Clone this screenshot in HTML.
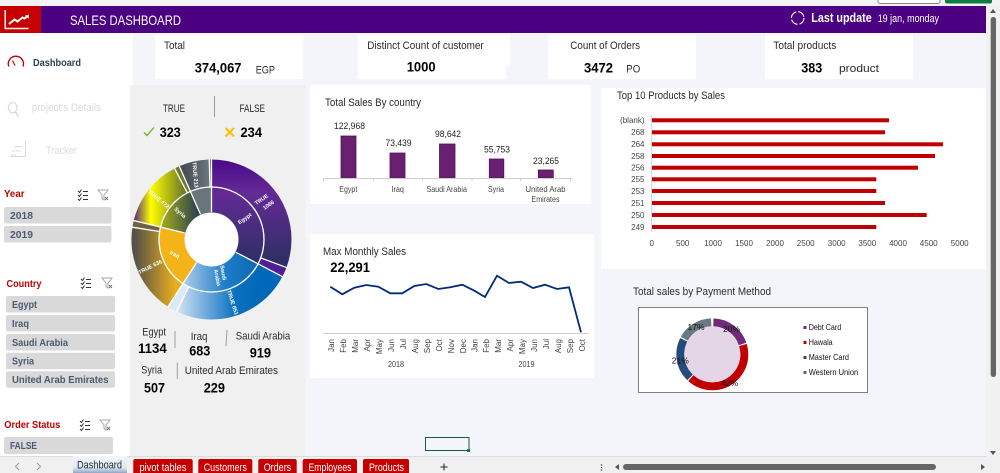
<!DOCTYPE html>
<html lang="en"><head><meta charset="utf-8"><title>Sales Dashboard</title>
<style>
html,body{margin:0;padding:0;width:1000px;height:473px;overflow:hidden;background:#fff}
svg{display:block;filter:blur(.3px)}
text{font-family:"Liberation Sans",sans-serif;fill:#222}
.b{font-weight:bold;fill:#000;font-size:14px}
.l{font-size:11px;fill:#2b2b2b}
.s{font-size:8px;fill:#444}
.sl{font-size:10.500px;font-weight:bold;fill:#4a5a70}
.r{font-size:10.500px;font-weight:bold;fill:#c00000}
.w{font-size:5.500px;fill:#fff;font-weight:bold}
.t{font-size:11px;fill:#fff}
</style></head><body>
<svg width="1000" height="473" viewBox="0 0 1000 473" xmlns="http://www.w3.org/2000/svg">
<defs>
<linearGradient id="eg" gradientUnits="userSpaceOnUse" x1="0" y1="160" x2="0" y2="270"><stop offset="0" stop-color="#4b0a8a"/><stop offset=".3" stop-color="#642a96"/><stop offset="1" stop-color="#263060"/></linearGradient>
<linearGradient id="sa" gradientUnits="userSpaceOnUse" x1="168" y1="0" x2="262" y2="0"><stop offset="0" stop-color="#f2f7fc"/><stop offset=".72" stop-color="#0a70c0"/><stop offset="1" stop-color="#0068b8"/></linearGradient>
<linearGradient id="sa2" gradientUnits="userSpaceOnUse" x1="170" y1="0" x2="250" y2="0"><stop offset="0" stop-color="#d6e6f6"/><stop offset=".7" stop-color="#1f7cc8"/><stop offset="1" stop-color="#0f6db8"/></linearGradient>
<linearGradient id="ir" gradientUnits="userSpaceOnUse" x1="132" y1="0" x2="175" y2="0"><stop offset="0" stop-color="#4c4c4c"/><stop offset="1" stop-color="#e8ae1e"/></linearGradient>
<linearGradient id="sy" gradientUnits="userSpaceOnUse" x1="133" y1="0" x2="192" y2="0"><stop offset="0" stop-color="#4b1a80"/><stop offset=".3" stop-color="#ffff00"/><stop offset="1" stop-color="#4c5a30"/></linearGradient>
<linearGradient id="sy2" gradientUnits="userSpaceOnUse" x1="160" y1="0" x2="199" y2="0"><stop offset="0" stop-color="#a8b018"/><stop offset="1" stop-color="#25404f"/></linearGradient>
<linearGradient id="ua" gradientUnits="userSpaceOnUse" x1="180" y1="0" x2="211" y2="0"><stop offset="0" stop-color="#3f474e"/><stop offset="1" stop-color="#6e7880"/></linearGradient>
<linearGradient id="tab" x1="0" y1="0" x2="0" y2="1"><stop offset="0" stop-color="#f4f6fa"/><stop offset=".7" stop-color="#dfe6f0"/><stop offset="1" stop-color="#8fa6c4"/></linearGradient>
<g id="ic1" fill="none" stroke="#333" stroke-width="1"><path d="M-5-4l1.500 1.500 2-3M-5 0l1.500 1.500 2-3M-5 4l1.500 1.500 2-3M0-3.500h5M0 .5h5M0 4.500h5"/></g>
<g id="ic2" fill="none" stroke="#a8a8a8" stroke-width="1"><path d="M-5-5h10l-4 5v5l-2-1.500v-3.500z"/><path d="M2 2l3 3M5 2l-3 3" stroke="#777"/></g>
</defs>

<!-- base -->
<rect width="1000" height="473" fill="#f4f5fa"/>
<rect x="0" y="0" width="1000" height="6" fill="#f3f3f3"/>
<rect x="878" y="-3" width="62" height="6.500" rx="2" fill="#fff" stroke="#888"/>
<rect x="945" y="-3" width="47" height="6.500" rx="2" fill="#107c41"/>
<rect x="986" y="6" width="14" height="451" fill="#f1f1f1"/>
<rect x="0" y="33" width="133" height="424" fill="#fff"/>
<rect x="130" y="85" width="175.500" height="372" fill="#f0f0f0"/>

<!-- header -->
<rect x="41" y="6" width="945" height="27" fill="#4b0082"/>
<rect x="0" y="6" width="41" height="27" fill="#c60000"/>
<path d="M5.200 10v18.500h23.300" fill="none" stroke="#f2f2f2" stroke-width="1.500"/>
<path d="M9 24l5.500-4.500 3 2 5-4 2 1 3-2.500" fill="none" stroke="#fff" stroke-width="2"/>
<path d="M25 15.500l4-.8-.3 4z" fill="#fff"/>
<text x="70" y="25" font-size="14" style="fill:#fff" textLength="111" lengthAdjust="spacingAndGlyphs">SALES DASHBOARD</text>
<circle cx="797.700" cy="18" r="6.300" fill="none" stroke="#fff" stroke-width="1.100" stroke-dasharray="8 2"/>
<text x="811.300" y="22" font-size="12.500" font-weight="bold" style="fill:#fff" textLength="60.400" lengthAdjust="spacingAndGlyphs">Last update</text>
<text x="877.700" y="22" class="t" textLength="61.300" lengthAdjust="spacingAndGlyphs">19 jan, monday</text>

<!-- KPI cards -->
<rect x="155" y="35" width="148" height="44" fill="#fff"/>
<rect x="358" y="35" width="152" height="31" fill="#fff"/><rect x="358" y="66" width="148" height="13" fill="#fff"/>
<rect x="548" y="35" width="148" height="44" fill="#fff"/>
<rect x="765" y="35" width="148" height="44" fill="#fff"/>
<text x="164" y="49" class="l" textLength="21" lengthAdjust="spacingAndGlyphs">Total</text>
<text x="194.700" y="72.500" class="b" textLength="46.800" lengthAdjust="spacingAndGlyphs">374,067</text>
<text x="255.700" y="73.500" class="l" textLength="19.300" lengthAdjust="spacingAndGlyphs">EGP</text>
<text x="367.300" y="49" class="l" textLength="116.400" lengthAdjust="spacingAndGlyphs">Distinct Count of customer</text>
<text x="406.700" y="71.500" class="b" textLength="29" lengthAdjust="spacingAndGlyphs">1000</text>
<text x="570.300" y="49" class="l" textLength="69.700" lengthAdjust="spacingAndGlyphs">Count of Orders</text>
<text x="584" y="72.500" class="b" textLength="29" lengthAdjust="spacingAndGlyphs">3472</text>
<text x="626.300" y="72.500" class="l" textLength="14" lengthAdjust="spacingAndGlyphs">PO</text>
<text x="773.300" y="49" class="l" textLength="63" lengthAdjust="spacingAndGlyphs">Total products</text>
<text x="801.300" y="72.500" class="b" textLength="21" lengthAdjust="spacingAndGlyphs">383</text>
<text x="839" y="72" class="l" textLength="40" lengthAdjust="spacingAndGlyphs">product</text>

<!-- Sidebar -->
<path d="M8.800 66.500a7.600 7.600 0 1 1 14.200 0" fill="none" stroke="#c00000" stroke-width="1.300"/>
<path d="M15 65.500l-2.500-5" stroke="#c00000" stroke-width="1.100"/>
<text x="33" y="66" font-size="10.500" font-weight="bold" style="fill:#2f3f4f" textLength="48" lengthAdjust="spacingAndGlyphs">Dashboard</text>
<ellipse cx="12.700" cy="107.700" rx="4.300" ry="5.200" fill="none" stroke="#dcdcdc" stroke-width="1.300"/>
<path d="M15.500 112l3 4.500" stroke="#d4d4d4" stroke-width="1.500"/>
<text x="31.700" y="111" font-size="11" style="fill:#dadada" textLength="69.300" lengthAdjust="spacingAndGlyphs">project's Details</text>
<path d="M25.500 140v16.500H11M14 146.500h7M12 151h9M11 155h5" fill="none" stroke="#dcdcdc" stroke-width="1.100"/>
<text x="46" y="154" font-size="11" style="fill:#dadada" textLength="31" lengthAdjust="spacingAndGlyphs">Tracker</text>

<text x="4" y="197" class="r" textLength="20.500" lengthAdjust="spacingAndGlyphs">Year</text>
<use href="#ic1" x="83" y="195"/><use href="#ic2" x="103" y="195"/>
<g fill="#d9d9d9">
<rect x="4" y="207" width="107.500" height="16.500" rx="2"/><rect x="4" y="226" width="107.500" height="16.500" rx="2"/>
<rect x="6" y="296" width="109" height="16.500" rx="2"/><rect x="6" y="315" width="109" height="16.500" rx="2"/><rect x="6" y="334" width="109" height="16.500" rx="2"/><rect x="6" y="352.700" width="109" height="16.500" rx="2"/><rect x="6" y="371.300" width="109" height="16.500" rx="2"/>
<rect x="4" y="437" width="109" height="17" rx="2"/>
</g>
<text x="10" y="219" class="sl" textLength="23" lengthAdjust="spacingAndGlyphs">2018</text>
<text x="10" y="238" class="sl" textLength="23" lengthAdjust="spacingAndGlyphs">2019</text>
<text x="6.500" y="287" class="r" textLength="35" lengthAdjust="spacingAndGlyphs">Country</text>
<use href="#ic1" x="86" y="283"/><use href="#ic2" x="107" y="283"/>
<text x="12" y="308" class="sl" textLength="25" lengthAdjust="spacingAndGlyphs">Egypt</text>
<text x="12" y="327" class="sl" textLength="17" lengthAdjust="spacingAndGlyphs">Iraq</text>
<text x="12" y="346" class="sl" textLength="56" lengthAdjust="spacingAndGlyphs">Saudi Arabia</text>
<text x="12" y="364.500" class="sl" textLength="22" lengthAdjust="spacingAndGlyphs">Syria</text>
<text x="12" y="383" class="sl" textLength="96.500" lengthAdjust="spacingAndGlyphs">United Arab Emirates</text>
<text x="4.300" y="428" class="r" textLength="56" lengthAdjust="spacingAndGlyphs">Order Status</text>
<use href="#ic1" x="85" y="425"/><use href="#ic2" x="105" y="425"/>
<text x="10" y="449" class="sl" textLength="27" lengthAdjust="spacingAndGlyphs">FALSE</text>

<!-- True/False panel -->
<text x="163" y="112" class="l" textLength="22" lengthAdjust="spacingAndGlyphs">TRUE</text>
<line x1="214.500" y1="96" x2="214.500" y2="117" stroke="#9a9a9a"/>
<text x="239.500" y="112" class="l" textLength="25.500" lengthAdjust="spacingAndGlyphs">FALSE</text>
<path d="M144 132.500l3 3 7-8" fill="none" stroke="#6cb52a" stroke-width="1.300"/>
<text x="159.700" y="137" class="b" textLength="21" lengthAdjust="spacingAndGlyphs">323</text>
<path d="M225.500 128l8.500 8.500M234 128l-8.500 8.500" fill="none" stroke="#ffc000" stroke-width="2"/>
<text x="240.500" y="137" class="b" textLength="21.500" lengthAdjust="spacingAndGlyphs">234</text>

<!-- Sunburst -->
<g fill="none">
<circle cx="211.500" cy="239.500" r="66" stroke="url(#eg)" stroke-width="28" pathLength="360" stroke-dasharray="110.500 249.500" stroke-dashoffset="90"/>
<circle cx="211.500" cy="239.500" r="66" stroke="#4f1d94" stroke-width="28" pathLength="360" stroke-dasharray="7.100 352.900" stroke-dashoffset="-20.500"/>
<circle cx="211.500" cy="239.500" r="66" stroke="url(#sa)" stroke-width="28" pathLength="360" stroke-dasharray="88.200 271.800" stroke-dashoffset="-27.600"/>
<circle cx="211.500" cy="239.500" r="66" stroke="#dbe8f5" stroke-width="28" pathLength="360" stroke-dasharray="7.100 352.900" stroke-dashoffset="-115.800"/>
<circle cx="211.500" cy="239.500" r="66" stroke="url(#ir)" stroke-width="28" pathLength="360" stroke-dasharray="65.900 294.100" stroke-dashoffset="-122.900"/>
<circle cx="211.500" cy="239.500" r="66" stroke="#6f6240" stroke-width="28" pathLength="360" stroke-dasharray="4.900 355.100" stroke-dashoffset="-188.800"/>
<circle cx="211.500" cy="239.500" r="66" stroke="url(#sy)" stroke-width="28" pathLength="360" stroke-dasharray="48.900 311.100" stroke-dashoffset="-193.700"/>
<circle cx="211.500" cy="239.500" r="66" stroke="#6c7a2c" stroke-width="28" pathLength="360" stroke-dasharray="3.700 356.300" stroke-dashoffset="-242.600"/>
<circle cx="211.500" cy="239.500" r="66" stroke="url(#ua)" stroke-width="28" pathLength="360" stroke-dasharray="22.100 337.900" stroke-dashoffset="-246.300"/>
<circle cx="211.500" cy="239.500" r="66" stroke="#5b636b" stroke-width="28" pathLength="360" stroke-dasharray="1.600 358.400" stroke-dashoffset="-268.400"/>

<circle cx="211.500" cy="239.500" r="39.500" stroke="url(#eg)" stroke-width="25" pathLength="360" stroke-dasharray="117.600 242.400" stroke-dashoffset="90"/>
<circle cx="211.500" cy="239.500" r="39.500" stroke="url(#sa2)" stroke-width="25" pathLength="360" stroke-dasharray="95.300 264.700" stroke-dashoffset="-27.600"/>
<circle cx="211.500" cy="239.500" r="39.500" stroke="#f4b417" stroke-width="25" pathLength="360" stroke-dasharray="70.800 289.200" stroke-dashoffset="-122.900"/>
<circle cx="211.500" cy="239.500" r="39.500" stroke="url(#sy2)" stroke-width="25" pathLength="360" stroke-dasharray="52.600 307.400" stroke-dashoffset="-193.700"/>
<circle cx="211.500" cy="239.500" r="39.500" stroke="#69747c" stroke-width="25" pathLength="360" stroke-dasharray="23.700 336.300" stroke-dashoffset="-246.300"/>
<circle cx="211.500" cy="239.500" r="52.500" stroke="#fff" stroke-width="1.300"/>
</g>
<g stroke="#fff" stroke-width="1.300">
<line x1="211.500" y1="212" x2="211.500" y2="159" transform="rotate(0 211.500 239.500)"/>
<line x1="211.500" y1="212" x2="211.500" y2="159" transform="rotate(117.600 211.500 239.500)"/>
<line x1="211.500" y1="212" x2="211.500" y2="159" transform="rotate(212.900 211.500 239.500)"/>
<line x1="211.500" y1="212" x2="211.500" y2="159" transform="rotate(283.700 211.500 239.500)"/>
<line x1="211.500" y1="212" x2="211.500" y2="159" transform="rotate(336.300 211.500 239.500)"/>
<line x1="211.500" y1="187" x2="211.500" y2="159" transform="rotate(110.500 211.500 239.500)"/>
<line x1="211.500" y1="187" x2="211.500" y2="159" transform="rotate(205.800 211.500 239.500)"/>
<line x1="211.500" y1="187" x2="211.500" y2="159" transform="rotate(278.800 211.500 239.500)"/>
<line x1="211.500" y1="187" x2="211.500" y2="159" transform="rotate(332.600 211.500 239.500)"/>
<line x1="211.500" y1="187" x2="211.500" y2="159" transform="rotate(358.400 211.500 239.500)"/>
</g>
<circle cx="211.500" cy="239.500" r="26.800" fill="#fff"/>
<g text-anchor="middle">
<text class="w" transform="translate(262.500 201) rotate(-35)">TRUE</text>
<text class="w" transform="translate(269.500 206.500) rotate(-35)">1066</text>
<text class="w" transform="translate(245.700 220) rotate(-35)">Egypt</text>
<text class="w" transform="translate(221.500 273) rotate(80)">Saudi</text>
<text class="w" transform="translate(215.500 278) rotate(80)">Arabia</text>
<text class="w" transform="translate(231 303) rotate(72)">TRUE 851</text>
<text class="w" transform="translate(174 256) rotate(25)">Iraq</text>
<text class="w" transform="translate(151 268.500) rotate(-27)">TRUE 636</text>
<text class="w" transform="translate(179 214) rotate(40)">Syria</text>
<text class="w" transform="translate(157.500 200.500) rotate(40)">TRUE 472</text>
<text class="w" transform="translate(193.500 175) rotate(85)">TRUE 213</text>
</g>

<!-- Country numbers -->
<text x="142.300" y="335.700" class="l" textLength="23.700" lengthAdjust="spacingAndGlyphs">Egypt</text>
<text x="138" y="353" class="b" textLength="28.700" lengthAdjust="spacingAndGlyphs">1134</text>
<line x1="175" y1="331" x2="175" y2="348" stroke="#a0a0a0"/>
<text x="190.700" y="340" class="l" textLength="16.800" lengthAdjust="spacingAndGlyphs">Iraq</text>
<text x="189.300" y="355.700" class="b" textLength="21" lengthAdjust="spacingAndGlyphs">683</text>
<line x1="227" y1="330" x2="226" y2="346" stroke="#a0a0a0"/>
<text x="235.700" y="339.300" class="l" textLength="54.600" lengthAdjust="spacingAndGlyphs">Saudi Arabia</text>
<text x="249.700" y="357.700" class="b" textLength="21.300" lengthAdjust="spacingAndGlyphs">919</text>
<text x="141.300" y="373.300" class="l" textLength="20.700" lengthAdjust="spacingAndGlyphs">Syria</text>
<line x1="177.300" y1="362.500" x2="177.300" y2="379" stroke="#a0a0a0"/>
<text x="184.700" y="374" class="l" textLength="93.300" lengthAdjust="spacingAndGlyphs">United Arab Emirates</text>
<text x="144" y="392.300" class="b" textLength="21" lengthAdjust="spacingAndGlyphs">507</text>
<text x="203.700" y="392.300" class="b" textLength="21.300" lengthAdjust="spacingAndGlyphs">229</text>

<!-- Total sales by country -->
<rect x="310" y="85" width="281" height="119" fill="#fff"/>
<text x="325" y="106" class="l" textLength="96" lengthAdjust="spacingAndGlyphs">Total Sales By country</text>
<g fill="#6a2070" stroke="#4a1458" stroke-width=".8">
<rect x="341" y="136" width="15" height="42"/><rect x="390" y="153" width="15" height="25"/><rect x="439.500" y="144" width="15.500" height="34"/><rect x="489.300" y="159" width="14.500" height="19"/><rect x="538.300" y="170" width="15" height="8"/>
</g>
<path d="M323.500 178.500h248M323.500 178.500v2.500M373.500 178.500v2.500M422.500 178.500v2.500M472 178.500v2.500M520.500 178.500v2.500M570.500 178.500v2.500" fill="none" stroke="#cfcfcf"/>
<g font-size="9" text-anchor="middle">
<text x="349.500" y="129" style="fill:#222" textLength="31" lengthAdjust="spacingAndGlyphs">122,968</text>
<text x="398.500" y="146" style="fill:#222" textLength="26" lengthAdjust="spacingAndGlyphs">73,439</text>
<text x="448" y="137" style="fill:#222" textLength="26" lengthAdjust="spacingAndGlyphs">98,642</text>
<text x="497" y="152.500" style="fill:#222" textLength="26" lengthAdjust="spacingAndGlyphs">55,753</text>
<text x="546" y="164" style="fill:#222" textLength="26" lengthAdjust="spacingAndGlyphs">23,265</text>
</g>
<g text-anchor="middle">
<text x="348.300" y="192" class="s" textLength="18" lengthAdjust="spacingAndGlyphs">Egypt</text>
<text x="397.700" y="192" class="s" textLength="12.500" lengthAdjust="spacingAndGlyphs">Iraq</text>
<text x="446.700" y="192" class="s" textLength="40.500" lengthAdjust="spacingAndGlyphs">Saudi Arabia</text>
<text x="496" y="192" class="s" textLength="16" lengthAdjust="spacingAndGlyphs">Syria</text>
<text x="545.500" y="192" class="s" textLength="40" lengthAdjust="spacingAndGlyphs">United Arab</text>
<text x="545.500" y="202" class="s" textLength="28" lengthAdjust="spacingAndGlyphs">Emirates</text>
</g>

<!-- Max monthly sales -->
<rect x="310" y="234" width="284" height="144" fill="#fff"/>
<text x="323" y="255" class="l" textLength="83" lengthAdjust="spacingAndGlyphs">Max Monthly Sales</text>
<text x="330.300" y="272" class="b" textLength="39.700" lengthAdjust="spacingAndGlyphs">22,291</text>
<line x1="323" y1="333.500" x2="589" y2="333.500" stroke="#d0d0d0"/>
<polyline fill="none" stroke="#002a7a" stroke-width="1.800" points="330.300,286.700 342.300,294.300 354.300,287.700 366.300,285 378.300,286.700 390.300,293.300 402.300,293.300 414.300,286 426.300,284 438.300,289 450.300,287.300 462.300,284.700 474.300,290.700 485,297 497,275.700 509,283 521,281.700 533,288 545,284.700 557,289 569,287.300 581,332.300"/>
<g text-anchor="end">
<text class="s" transform="translate(334 339) rotate(-90)">Jan</text>
<text class="s" transform="translate(346 339) rotate(-90)">Feb</text>
<text class="s" transform="translate(358 339) rotate(-90)">Mar</text>
<text class="s" transform="translate(370 339) rotate(-90)">Apr</text>
<text class="s" transform="translate(382 339) rotate(-90)">May</text>
<text class="s" transform="translate(394 339) rotate(-90)">Jun</text>
<text class="s" transform="translate(406 339) rotate(-90)">Jul</text>
<text class="s" transform="translate(418 339) rotate(-90)">Aug</text>
<text class="s" transform="translate(430 339) rotate(-90)">Sep</text>
<text class="s" transform="translate(442 339) rotate(-90)">Oct</text>
<text class="s" transform="translate(454 339) rotate(-90)">Nov</text>
<text class="s" transform="translate(466 339) rotate(-90)">Dec</text>
<text class="s" transform="translate(477.500 339) rotate(-90)">Jan</text>
<text class="s" transform="translate(489 339) rotate(-90)">Feb</text>
<text class="s" transform="translate(501 339) rotate(-90)">Mar</text>
<text class="s" transform="translate(513 339) rotate(-90)">Apr</text>
<text class="s" transform="translate(525 339) rotate(-90)">May</text>
<text class="s" transform="translate(537 339) rotate(-90)">Jun</text>
<text class="s" transform="translate(549 339) rotate(-90)">Jul</text>
<text class="s" transform="translate(561 339) rotate(-90)">Aug</text>
<text class="s" transform="translate(573 339) rotate(-90)">Sep</text>
<text class="s" transform="translate(585 339) rotate(-90)">Oct</text>
</g>
<text x="388" y="367" class="s" textLength="16" lengthAdjust="spacingAndGlyphs">2018</text>
<text x="518.500" y="367" class="s" textLength="16" lengthAdjust="spacingAndGlyphs">2019</text>

<!-- Top 10 -->
<rect x="601" y="88" width="385" height="181" fill="#fff"/>
<text x="617" y="99" class="l" textLength="108" lengthAdjust="spacingAndGlyphs">Top 10 Products by Sales</text>
<line x1="651.500" y1="115" x2="651.500" y2="232" stroke="#d8d8d8"/>
<g fill="#c00000">
<rect x="652" y="118.300" width="237" height="4"/><rect x="652" y="130.300" width="233" height="4"/><rect x="652" y="142.300" width="291" height="4"/><rect x="652" y="154" width="283" height="4"/><rect x="652" y="165.700" width="266" height="4"/><rect x="652" y="177.300" width="224.300" height="4"/><rect x="652" y="189" width="224.300" height="4"/><rect x="652" y="201" width="233" height="4"/><rect x="652" y="213" width="274.700" height="4"/><rect x="652" y="225" width="224.300" height="4"/>
</g>
<g text-anchor="end">
<text x="644.500" y="123" class="s">(blank)</text><text x="644.500" y="135" class="s">268</text><text x="644.500" y="147" class="s">264</text><text x="644.500" y="159" class="s">258</text><text x="644.500" y="170.500" class="s">256</text><text x="644.500" y="182" class="s">255</text><text x="644.500" y="194" class="s">253</text><text x="644.500" y="206" class="s">251</text><text x="644.500" y="218" class="s">250</text><text x="644.500" y="230" class="s">249</text>
</g>
<g text-anchor="middle">
<text x="651.700" y="246" class="s">0</text><text x="682.700" y="246" class="s">500</text><text x="713" y="246" class="s">1000</text><text x="744" y="246" class="s">1500</text><text x="775" y="246" class="s">2000</text><text x="805.700" y="246" class="s">2500</text><text x="836.700" y="246" class="s">3000</text><text x="867.300" y="246" class="s">3500</text><text x="898" y="246" class="s">4000</text><text x="928.700" y="246" class="s">4500</text><text x="959.700" y="246" class="s">5000</text>
</g>

<!-- Payment -->
<text x="633" y="295" class="l" textLength="138" lengthAdjust="spacingAndGlyphs">Total sales by Payment Method</text>
<rect x="638.500" y="307.500" width="229" height="85" fill="#fff" stroke="#808080"/>
<g fill="none">
<circle cx="712.300" cy="354.300" r="32" stroke="#702a78" stroke-width="8" pathLength="360" stroke-dasharray="69 291" stroke-dashoffset="88"/>
<circle cx="712.300" cy="354.300" r="32" stroke="#c00000" stroke-width="8" pathLength="360" stroke-dasharray="149 211" stroke-dashoffset="17"/>
<circle cx="712.300" cy="354.300" r="32" stroke="#264a7a" stroke-width="8" pathLength="360" stroke-dasharray="73 287" stroke-dashoffset="-134"/>
<circle cx="712.300" cy="354.300" r="32" stroke="#6a7880" stroke-width="8" pathLength="360" stroke-dasharray="59 301" stroke-dashoffset="-209"/>
</g>
<circle cx="712.300" cy="354.300" r="28" fill="#e4d6e6"/>
<g text-anchor="middle" font-size="8.500">
<text x="731.500" y="332" style="fill:#111">20%</text>
<text x="729.500" y="386" style="fill:#111">42%</text>
<text x="680.300" y="363.500" style="fill:#111">21%</text>
<text x="696" y="330" style="fill:#111">17%</text>
</g>
<rect x="803.500" y="326" width="3" height="3" fill="#702a78"/><rect x="803.500" y="341" width="3" height="3" fill="#c00000"/><rect x="803.500" y="356" width="3" height="3" fill="#264a7a"/><rect x="803.500" y="371" width="3" height="3" fill="#5a6a74"/>
<text x="808.700" y="330" class="s" style="fill:#111" textLength="32.500" lengthAdjust="spacingAndGlyphs">Debt Card</text>
<text x="808.700" y="345" class="s" style="fill:#111" textLength="24" lengthAdjust="spacingAndGlyphs">Hawala</text>
<text x="808.700" y="360" class="s" style="fill:#111" textLength="40.300" lengthAdjust="spacingAndGlyphs">Master Card</text>
<text x="808.700" y="375" class="s" style="fill:#111" textLength="49.500" lengthAdjust="spacingAndGlyphs">Western Union</text>

<!-- selected cell -->
<rect x="425.500" y="437.500" width="43.500" height="13" fill="none" stroke="#1e5b38" stroke-width="1"/>
<rect x="467" y="449" width="3" height="3" fill="#107c41"/>

<!-- scrollbars -->
<path d="M993 9l-3 4h6zM993 455l-3-4h6z" fill="#555"/>
<rect x="990.700" y="17" width="5.300" height="360" rx="2.500" fill="#666"/>
<rect x="0" y="457" width="1000" height="16" fill="#f0f0f0"/>
<line x1="0" y1="456.500" x2="986" y2="456.500" stroke="#dcdcdc"/>
<path d="M19 463l-3.500 3.500 3.500 3.500M37 463l3.500 3.500-3.500 3.500" fill="none" stroke="#999"/>
<rect x="73" y="456" width="54" height="17" fill="url(#tab)"/>
<text x="77" y="468.500" font-size="11" style="fill:#1f2a3a" textLength="45" lengthAdjust="spacingAndGlyphs">Dashboard</text>
<g fill="#c60000">
<path d="M133.300 473v-12a2 2 0 0 1 2-2h55.400a2 2 0 0 1 2 2v12z"/><path d="M198.300 473v-12a2 2 0 0 1 2-2h50a2 2 0 0 1 2 2v12z"/><path d="M258.300 473v-12a2 2 0 0 1 2-2h34.400a2 2 0 0 1 2 2v12z"/><path d="M302.700 473v-12a2 2 0 0 1 2-2h50.300a2 2 0 0 1 2 2v12z"/><path d="M363 473v-12a2 2 0 0 1 2-2h42a2 2 0 0 1 2 2v12z"/>
</g>
<text x="139.500" y="471" class="t" textLength="47" lengthAdjust="spacingAndGlyphs">pivot tables</text>
<text x="203.700" y="471" class="t" textLength="43.300" lengthAdjust="spacingAndGlyphs">Customers</text>
<text x="263.700" y="471" class="t" textLength="27.500" lengthAdjust="spacingAndGlyphs">Orders</text>
<text x="308.500" y="471" class="t" textLength="43" lengthAdjust="spacingAndGlyphs">Employees</text>
<text x="369" y="471" class="t" textLength="35" lengthAdjust="spacingAndGlyphs">Products</text>
<path d="M444 463.500v7M440.500 467h7" stroke="#222" stroke-width="1"/>
<path d="M601.500 464.500v1M601.500 467v1M601.500 469.500v1" stroke="#111" stroke-width="1.300"/>
<path d="M615 467l4-3v6zM985 467l-4-3v6z" fill="#555"/>
<rect x="623" y="464" width="313" height="6" rx="3" fill="#666"/>
</svg>
</body></html>
